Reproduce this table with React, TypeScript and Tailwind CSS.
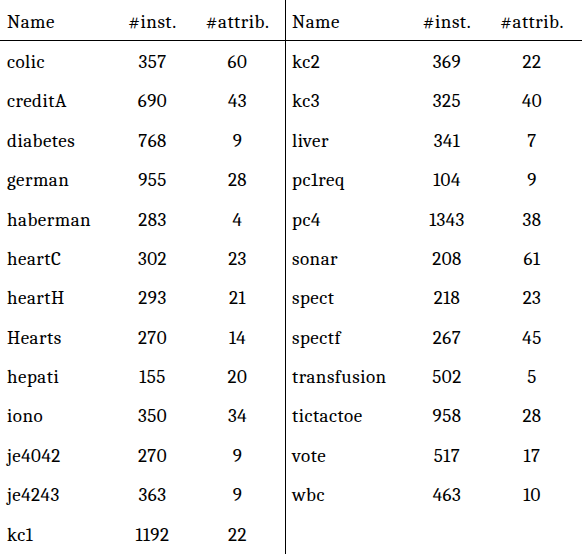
const left: [string, number, number][] = [
  ['colic', 357, 60],
  ['creditA', 690, 43],
  ['diabetes', 768, 9],
  ['german', 955, 28],
  ['haberman', 283, 4],
  ['heartC', 302, 23],
  ['heartH', 293, 21],
  ['Hearts', 270, 14],
  ['hepati', 155, 20],
  ['iono', 350, 34],
  ['je4042', 270, 9],
  ['je4243', 363, 9],
  ['kc1', 1192, 22],
];

const right: [string, number, number][] = [
  ['kc2', 369, 22],
  ['kc3', 325, 40],
  ['liver', 341, 7],
  ['pc1req', 104, 9],
  ['pc4', 1343, 38],
  ['sonar', 208, 61],
  ['spect', 218, 23],
  ['spectf', 267, 45],
  ['transfusion', 502, 5],
  ['tictactoe', 958, 28],
  ['vote', 517, 17],
  ['wbc', 463, 10],
];

function Half({ rows, cols, pad }: { rows: [string, number, number][]; cols: string; pad: string }) {
  return (
    <div>
      <div className={`grid ${cols} h-[41px] items-end pb-[4px] border-b border-black`}>
        <span className={pad}>Name</span>
        <span className="text-center">#inst.</span>
        <span className="text-center">#attrib.</span>
      </div>
      {rows.map(([name, inst, attr]) => (
        <div key={name} className={`grid ${cols} h-[39.4px] items-center pt-[3px]`}>
          <span className={pad}>{name}</span>
          <span className="text-center">{inst}</span>
          <span className="text-center">{attr}</span>
        </div>
      ))}
    </div>
  );
}

export default function App() {
  return (
    <div className="w-[582px] h-[554px] bg-white text-black flex text-[19px] tracking-[0.5px] font-serif">
      <div className="w-[286px] border-r border-black h-full">
        <Half rows={left} cols="grid-cols-[115px_75px_95px]" pad="pl-[7px]" />
      </div>
      <div className="flex-1 h-full">
        <Half rows={right} cols="grid-cols-[117px_88px_82px]" pad="pl-[6px]" />
      </div>
    </div>
  );
}
